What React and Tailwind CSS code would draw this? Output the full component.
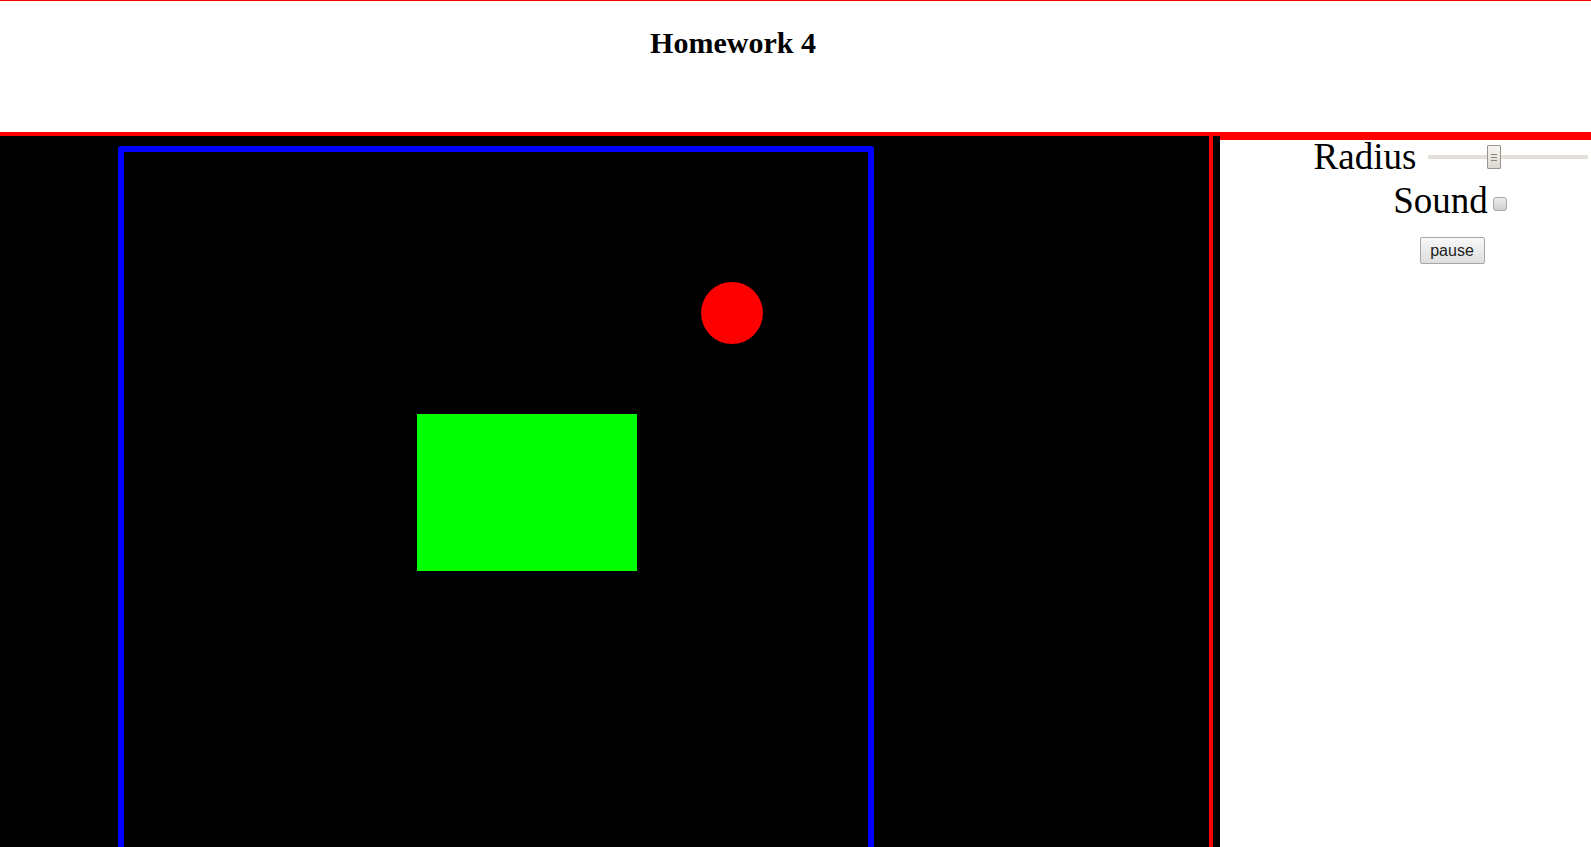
import React from "react";

export default function App() {
  return (
    <div className="w-[1591px] h-[847px] overflow-hidden bg-white">
      <header className="h-[136px] border-t border-b-4 border-[#ff0000] box-border">
        <h1
          className="w-[1466px] text-center font-bold text-[30px] leading-[1.15] pt-[25px] text-black"
          style={{ fontFamily: '"Liberation Serif", serif' }}
        >
          Homework 4
        </h1>
      </header>
      <div className="flex h-[711px]">
        <div className="w-[1220px] shrink-0 bg-black flex">
          <div className="relative w-[1209px] h-full overflow-hidden">
            <div className="absolute left-[118px] top-[10px] w-[756px] h-[900px] border-[6px] border-[#0000ff] rounded-[3px]" />
            <div className="absolute left-[701px] top-[146px] w-[62px] h-[62px] rounded-full bg-[#ff0000]" />
            <div className="absolute left-[417px] top-[278px] w-[220px] h-[157px] bg-[#00ff00]" />
          </div>
          <div className="w-[4px] bg-[#ff0000]" />
        </div>
        <div className="flex-1 border-t-4 border-[#ff0000] overflow-hidden">
          <div
            className="w-[464px] flex flex-col items-center text-black"
            style={{ fontFamily: '"Liberation Serif", serif' }}
          >
            <div className="flex items-center text-[37px] leading-[1.15] -mt-[4px]">
              <span>Radius</span>
              <div className="relative w-[160px] h-[24px] ml-[12px] mr-[2px]">
                <div className="absolute left-0 right-0 top-[10px] h-[4px] bg-[#e3e0da]" />
                <div className="absolute left-[59px] top-0 w-[14px] h-[24px] border border-[#9a958c] bg-gradient-to-b from-[#f6f5f2] to-[#dcd8d0] flex flex-col items-center justify-center gap-[2px] rounded-[1px]">
                  <span className="block w-[6px] h-px bg-[#8a857c]" />
                  <span className="block w-[6px] h-px bg-[#8a857c]" />
                  <span className="block w-[6px] h-px bg-[#8a857c]" />
                </div>
              </div>
            </div>
            <div className="flex items-center text-[37px] leading-[1.15] mt-[1px]">
              <span>Sound</span>
              <span className="block w-[14px] h-[14px] ml-[5px] mr-[4px] mt-[6px] rounded-[3px] border border-[#a8a8a8] bg-gradient-to-b from-[#ececec] to-[#cfcfcf]" />
            </div>
            <button
              className="mt-[15px] w-[65px] h-[27px] border border-[#a6a6a6] rounded-[2px] bg-gradient-to-b from-[#f8f8f8] to-[#dedede] text-[16px] text-[#222] leading-none"
              style={{ fontFamily: '"Liberation Sans", Arial, sans-serif' }}
            >
              pause
            </button>
          </div>
        </div>
      </div>
    </div>
  );
}
